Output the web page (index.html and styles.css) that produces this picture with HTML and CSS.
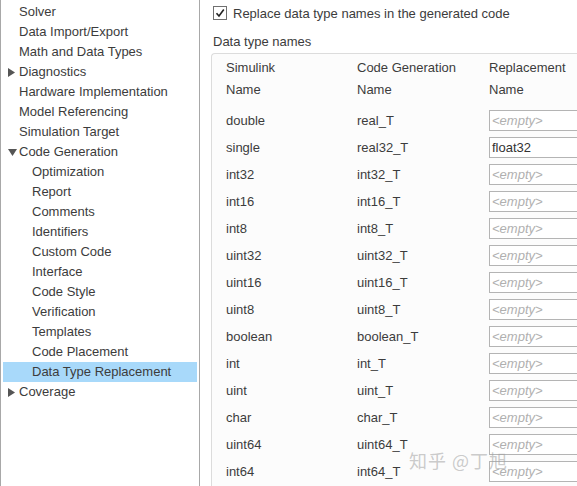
FILE: index.html
```html
<!DOCTYPE html>
<html lang="en">
<head>
  <meta charset="UTF-8">
  <title>Data Type Replacement</title>
  <link rel="stylesheet" href="styles.css">
</head>
<body>
  <div class="page">
    <!-- left tree -->
    <div class="tree">
      <div class="node"><span class="twisty"></span>Solver</div>
      <div class="node"><span class="twisty"></span>Data Import/Export</div>
      <div class="node"><span class="twisty"></span>Math and Data Types</div>
      <div class="node"><span class="twisty"><svg width="7" height="9" viewBox="0 0 7 9"><path d="M0 0 L7 4.5 L0 9 Z" fill="#555"/></svg></span>Diagnostics</div>
      <div class="node"><span class="twisty"></span>Hardware Implementation</div>
      <div class="node"><span class="twisty"></span>Model Referencing</div>
      <div class="node"><span class="twisty"></span>Simulation Target</div>
      <div class="node"><span class="twisty"><svg width="9" height="7" viewBox="0 0 9 7"><path d="M0 0 L9 0 L4.5 7 Z" fill="#555"/></svg></span>Code Generation</div>
      <div class="node child">Optimization</div>
      <div class="node child">Report</div>
      <div class="node child">Comments</div>
      <div class="node child">Identifiers</div>
      <div class="node child">Custom Code</div>
      <div class="node child">Interface</div>
      <div class="node child">Code Style</div>
      <div class="node child">Verification</div>
      <div class="node child">Templates</div>
      <div class="node child">Code Placement</div>
      <div class="node child selected">Data Type Replacement</div>
      <div class="node"><span class="twisty"><svg width="7" height="9" viewBox="0 0 7 9"><path d="M0 0 L7 4.5 L0 9 Z" fill="#555"/></svg></span>Coverage</div>
    </div>

    <!-- right settings -->
    <div class="pane">
      <div class="check-row">
        <span class="checkbox"><svg width="10" height="10" viewBox="0 0 10 10"><path d="M1.5 5.2 L4 8 L8.8 1.5" fill="none" stroke="#222" stroke-width="1.6"/></svg></span>
        <span>Replace data type names in the generated code</span>
      </div>
      <div class="group-title">Data type names</div>
      <div class="names-box">
        <div class="head">
          <div class="cell">Simulink<br>Name</div>
          <div class="cell">Code Generation<br>Name</div>
          <div class="cell">Replacement<br>Name</div>
        </div>
        <div class="rows" id="rows"></div>
      </div>
    </div>
  </div>
  <div class="watermark">知乎 @丁旭</div>

  <script>
    const types = [
      ['double', 'real_T', ''],
      ['single', 'real32_T', 'float32'],
      ['int32', 'int32_T', ''],
      ['int16', 'int16_T', ''],
      ['int8', 'int8_T', ''],
      ['uint32', 'uint32_T', ''],
      ['uint16', 'uint16_T', ''],
      ['uint8', 'uint8_T', ''],
      ['boolean', 'boolean_T', ''],
      ['int', 'int_T', ''],
      ['uint', 'uint_T', ''],
      ['char', 'char_T', ''],
      ['uint64', 'uint64_T', ''],
      ['int64', 'int64_T', '']
    ];
    const rows = document.getElementById('rows');
    types.forEach(t => {
      const row = document.createElement('div');
      row.className = 'row';
      row.innerHTML =
        '<div class="cell">' + t[0] + '</div>' +
        '<div class="cell">' + t[1] + '</div>' +
        '<div class="cell"><div class="field' + (t[2] ? '' : ' empty') + '">' +
        (t[2] || '&lt;empty&gt;') + '</div></div>';
      rows.appendChild(row);
    });
  </script>
</body>
</html>
```

FILE: styles.css
```css
html, body { margin: 0; padding: 0; width: 100%; height: 100%; background: #fff; overflow: hidden; }
body { font-family: Arial, "Liberation Sans", sans-serif; font-size: 13px; color: #3c3c3c; }
.page { display: flex; height: 100%; }

/* tree */
.tree { width: 198px; flex: none; border-left: 1px solid #a8a8a8; border-right: 1px solid #a8a8a8; padding-top: 2px; }
.node { height: 20px; line-height: 20px; display: flex; align-items: center; padding-left: 5px; margin: 0 2px; white-space: nowrap; }
.twisty { width: 11px; display: flex; align-items: center; justify-content: flex-start; }
.node.child { padding-left: 29px; }
.node.selected { background: #a8d9fa; }

/* right pane */
.pane { flex: 1; padding-left: 11px; min-width: 0; display: flex; flex-direction: column; }
.check-row { height: 26px; flex: none; display: flex; align-items: center; gap: 6px; padding-left: 2px; }
.checkbox { width: 12px; height: 12px; border: 1px solid #707070; background: #fff; display: flex; align-items: center; justify-content: center; }
.group-title { height: 27px; flex: none; line-height: 32px; padding-left: 2px; }
.names-box { flex: 1; min-height: 0; overflow: hidden; border: 1px solid #dcdcdc; border-right: none; border-bottom: none; border-top-left-radius: 4px; background: #fcfcfc; padding: 3px 0 0 14px; }
.head, .row { display: grid; grid-template-columns: 131px 132px 1fr; }
.head { line-height: 22px; padding-bottom: 6px; }
.row { height: 27px; align-items: center; }
.field { height: 19px; line-height: 19px; border: 1px solid #b4b4b4; border-right: none; background: #fff; padding-left: 2px; color: #333; }
.field.empty { color: #b0b0b0; font-style: italic; }

.watermark { position: absolute; left: 409px; top: 447px; font-family: "Noto Sans CJK SC", sans-serif; font-size: 18px; color: rgba(160, 160, 160, 0.55); letter-spacing: 1px; }
```
